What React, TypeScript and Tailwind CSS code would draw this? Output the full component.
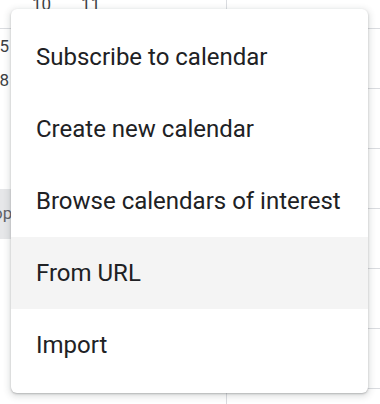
import { useState } from 'react'

const items = [
  'Subscribe to calendar',
  'Create new calendar',
  'Browse calendars of interest',
  'From URL',
  'Import',
]

const hours = [0, 1, 2, 3, 4, 5, 6]

const App = () => {
  const [hovered, setHovered] = useState(3)

  return (
    <div
      className="relative h-[404px] w-[380px] overflow-hidden bg-white"
      style={{ fontFamily: 'Roboto, "Noto Sans", sans-serif' }}
    >
      {/* Calendar behind the menu */}
      <div className="flex h-full flex-col">
        <div className="flex h-[29px] shrink-0 border-b border-[#dadce0]">
          <div className="flex w-[227px] shrink-0 items-start gap-[30px] border-r border-[#dadce0] pl-[32px] text-[17px] leading-[14px] text-[#3c4043]">
            <span className="-mt-[3px]">10</span>
            <span className="-mt-[3px]">11</span>
          </div>
          <div className="flex-1" />
        </div>
        <div className="flex flex-1">
          <div className="relative w-[227px] shrink-0 border-r border-[#dadce0]">
            <div className="flex flex-col pt-[8px] text-[17px] leading-[18px] text-[#3c4043]">
              <span className="-ml-[10px] h-[34px]">15</span>
              <span className="-ml-[10px]">18</span>
            </div>
            <div className="mt-[100px] flex h-[50px] w-[24px] items-center bg-[#e6e7e9] text-[17px] text-[#5f6368]">
              <span className="-ml-[7px]">op</span>
            </div>
            <div className="absolute bottom-[-6px] left-[150px] text-[13px] text-[#70757a]">3 AM</div>
          </div>
          <div className="flex flex-1 flex-col">
            {hours.map((h) => (
              <div key={h} className="h-[60px] shrink-0 border-b border-[#dadce0]" />
            ))}
          </div>
        </div>
      </div>

      {/* Dropdown menu */}
      <div className="absolute left-[11px] top-[9px] w-[357px] rounded-[6px] bg-white py-[12px] shadow-[0_2px_6px_2px_rgba(60,64,67,0.15),0_1px_2px_0_rgba(60,64,67,0.3)]">
        {items.map((label, i) => (
          <div
            key={label}
            onMouseEnter={() => setHovered(i)}
            className={`flex h-[72px] cursor-pointer items-center pl-[25px] text-[24px] text-[#202124] ${
              hovered === i ? 'bg-[#f4f4f4]' : 'bg-white'
            }`}
          >
            {label}
          </div>
        ))}
      </div>
    </div>
  )
}

export default App
